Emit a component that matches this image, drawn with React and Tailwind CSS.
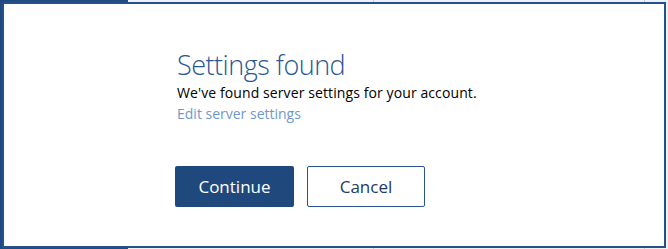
import React from 'react';

const font = { fontFamily: '"Open Sans", "Noto Sans", sans-serif' };

const Backdrop = () => (
    <div className="absolute inset-0 flex">
        <div className="w-[128px] h-full bg-[#204b82]" />
        <div className="flex-1 h-full bg-[#eef1f6] flex">
            <div className="w-[246px] h-full border-r border-[#c9d0db]" />
            <div className="flex-1 h-full" />
            <div className="w-[24px] h-full border-l border-[#c9d0db]" />
        </div>
    </div>
);

const App = () => {
    return (
        <div className="relative w-[668px] h-[249px] overflow-hidden bg-[#eef1f6]" style={font}>
            <Backdrop />
            <div className="absolute left-[2px] top-[2px] w-[664px] h-[246px] bg-white border-2 border-[#24508c]">
                <div className="pl-[173px] pt-[42px]">
                    <h2 className="text-[27px] leading-[38px] font-light text-[#2a5694] tracking-[-0.5px]">Settings found</h2>
                    <p className="text-[14px] leading-[19px] text-black tracking-[0.1px] -mt-[1px]">We've found server settings for your account.</p>
                    <a className="block text-[14px] leading-[19px] text-[#7097cb] mt-[2px]">Edit server settings</a>
                    <div className="flex gap-[13px] mt-[43px] -ml-[2px]">
                        <button className="w-[119px] h-[41px] rounded-[2px] bg-[#1f497d] text-white text-[17px]">Continue</button>
                        <button className="w-[118px] h-[41px] rounded-[2px] bg-white border border-[#2a5591] text-[#1f3a66] text-[17px]">Cancel</button>
                    </div>
                </div>
            </div>
        </div>
    );
};

export default App;
